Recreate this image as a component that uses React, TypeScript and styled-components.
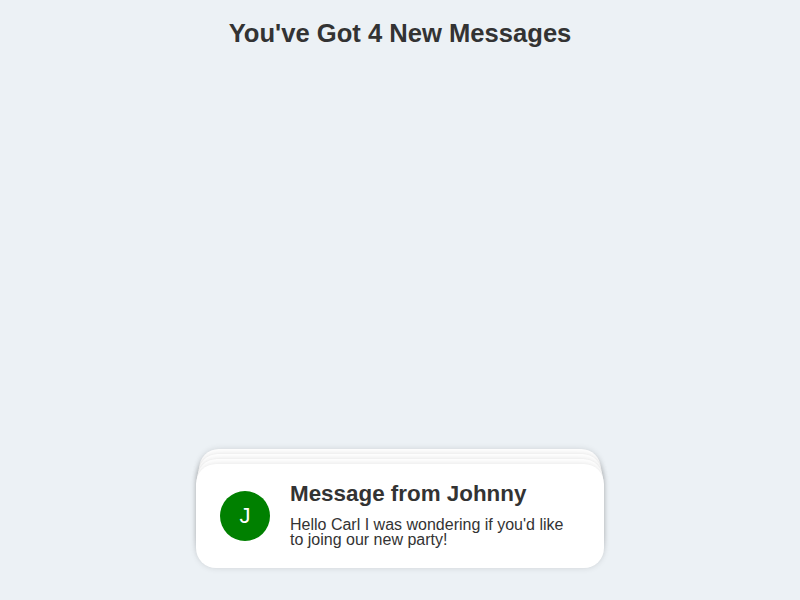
import React from "react";
import styled, { createGlobalStyle } from "styled-components";

const GlobalStyle = createGlobalStyle`
  html, body { margin: 0; padding: 0; }
  body {
    background: #ecf1f5;
    font-family: "Liberation Sans", Arial, sans-serif;
    color: #333;
  }
`;

const Page = styled.div`
  min-height: 100vh;
  box-sizing: border-box;
  display: flex;
  flex-direction: column;
  align-items: center;
  padding: 18px 0 32px;
`;

const Heading = styled.h1`
  margin: 0;
  font-size: 25.6px;
  font-weight: bold;
  color: #333;
  line-height: 30px;
`;

const Stack = styled.div`
  margin-top: auto;
  position: relative;
  width: 408px;
`;

const BackCard = styled.div<{ $depth: number }>`
  position: absolute;
  left: 0;
  right: 0;
  top: 0;
  bottom: 0;
  background: #fff;
  border-radius: 20px;
  box-shadow: 0 0 6px rgba(0, 0, 0, 0.12);
  transform: translateY(${(p) => -5 * p.$depth}px) scaleX(${(p) => 1 - 0.005 * p.$depth});
  z-index: ${(p) => 10 - p.$depth};
`;

const Card = styled.div`
  position: relative;
  z-index: 20;
  display: flex;
  align-items: center;
  gap: 20px;
  padding: 17px 24px 21px;
  background: #fff;
  border-radius: 20px;
  box-shadow: 0 0 6px rgba(0, 0, 0, 0.12);
`;

const Avatar = styled.div`
  flex: none;
  width: 50px;
  height: 50px;
  margin-top: 3px;
  border-radius: 50%;
  background: #008000;
  color: #fff;
  display: flex;
  align-items: center;
  justify-content: center;
  font-size: 22px;
  font-family: "Liberation Sans", Arial, sans-serif;
`;

const Body = styled.div`
  display: flex;
  flex-direction: column;
  gap: 10px;
`;

const Title = styled.h2`
  margin: 0;
  font-size: 22.4px;
  font-weight: bold;
  line-height: 26px;
  color: #333;
`;

const Text = styled.p`
  margin: 0;
  font-size: 16px;
  line-height: 15px;
  color: #333;
`;

export default function App() {
  return (
    <>
      <GlobalStyle />
      <Page>
        <Heading>You've Got 4 New Messages</Heading>
        <Stack>
          <BackCard $depth={3} />
          <BackCard $depth={2} />
          <BackCard $depth={1} />
          <Card>
            <Avatar>J</Avatar>
            <Body>
              <Title>Message from Johnny</Title>
              <Text>Hello Carl I was wondering if you'd like to joing our new party!</Text>
            </Body>
          </Card>
        </Stack>
      </Page>
    </>
  );
}
